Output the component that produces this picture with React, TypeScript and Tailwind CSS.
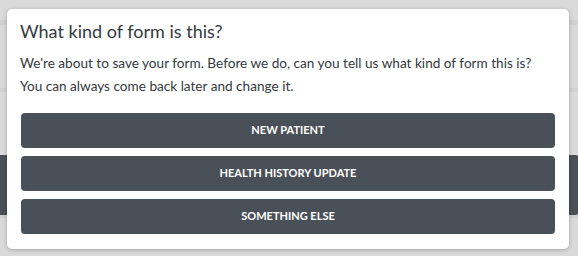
import React from "react";

const options = ["New Patient", "Health History Update", "Something Else"];

export default function App() {
  return (
    <div className="relative h-[256px] w-[578px] overflow-hidden bg-[#dadada] font-['Lato','Noto_Sans',sans-serif]">
      {/* page behind the modal */}
      <div className="flex h-full flex-col">
        <div className="h-[20px]" />
        <div className="h-[5px] bg-[#d1d1d1]" />
        <div className="h-[63px]" />
        <div className="h-[4px] bg-[#d1d1d1]" />
        <div className="h-[63px]" />
        <div className="flex h-[60px] justify-between">
          <div className="w-[20px] bg-[#4a5058]" />
          <div className="w-[30px] rounded-l-[8px] rounded-r-[2px] bg-[#4a5058]" />
        </div>
        <div className="h-[3px] bg-[#d0d0d0]" />
      </div>

      <div className="absolute left-[7px] top-[9px] flex w-[562px] flex-col rounded-[5px] bg-white px-[13px] pb-[15px] pt-[9px] shadow-[0_1px_4px_rgba(0,0,0,0.25)]">
        <h2 className="text-[18px] leading-[26px] font-normal text-[#343a40]">What kind of form is this?</h2>
        <p className="mt-[8px] text-[13.6px] leading-[23px] text-[#343a40]">
          We're about to save your form. Before we do, can you tell us what kind of form this is?
          <br />
          You can always come back later and change it.
        </p>
        <div className="mt-[15px] flex flex-col gap-[8px] px-[1px]">
          {options.map((o) => (
            <button
              key={o}
              type="button"
              className="h-[35px] w-full rounded-[4px] bg-[#4a5058] text-[11px] font-bold uppercase text-white"
            >
              {o}
            </button>
          ))}
        </div>
      </div>
    </div>
  );
}
